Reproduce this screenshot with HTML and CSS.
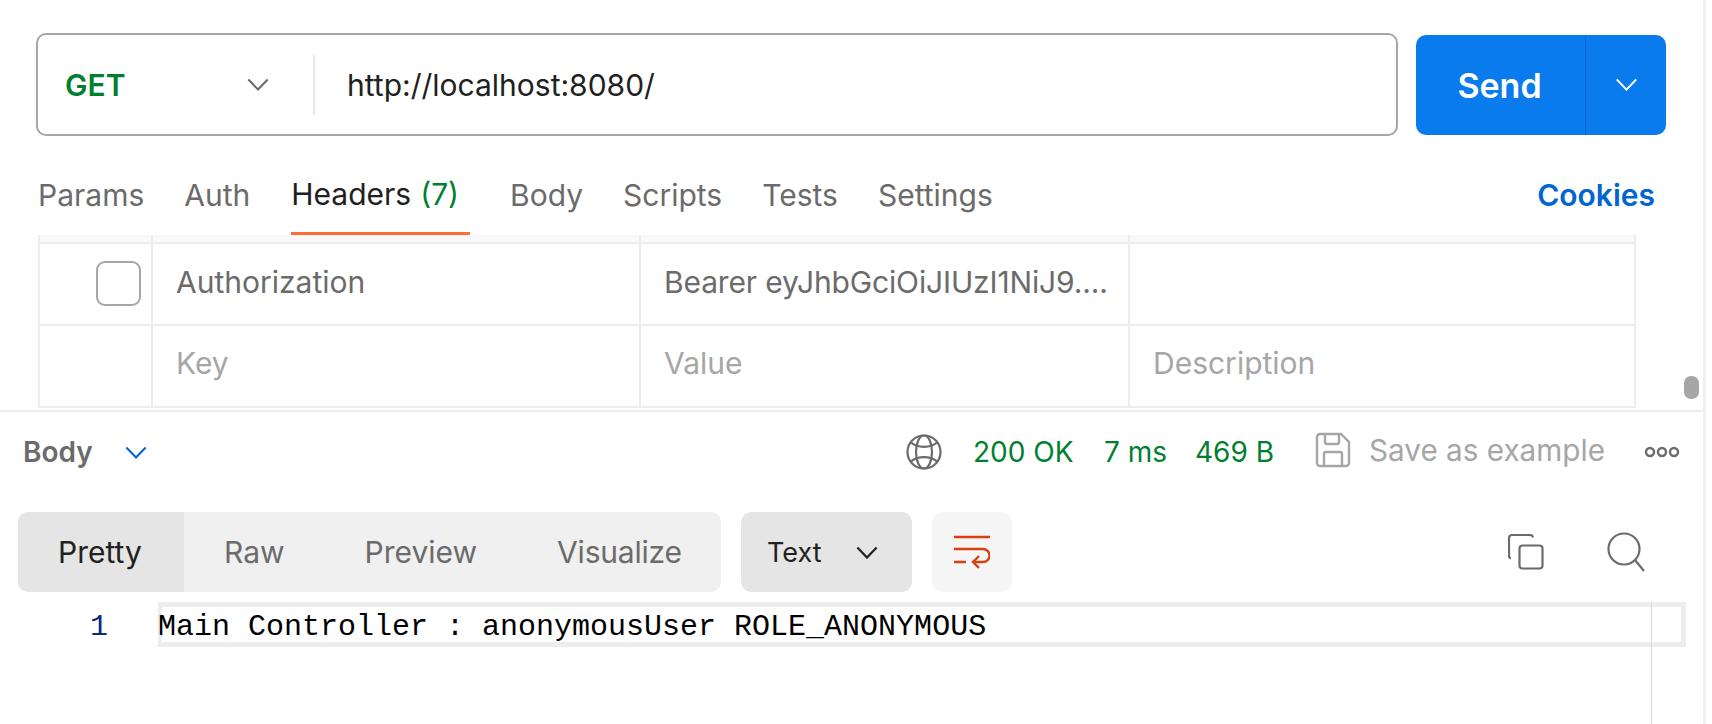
FILE: index.html
```html
<!DOCTYPE html>
<html lang="en">
<head>
<meta charset="utf-8">
<title>Request</title>
<link rel="stylesheet" href="styles.css">
</head>
<body>
<div class="app">
  <section class="request">
    <div class="request-bar">
      <div class="url-box">
        <div class="method">
          <span class="method-name">GET</span>
          <svg class="chev-method" viewBox="0 0 24 14"><path d="M1.5 1.5 12 12.5 22.5 1.5"/></svg>
        </div>
        <div class="url">http://localhost:8080/</div>
      </div>
      <div class="send">
        <span class="send-main">Send</span>
        <span class="send-more"><svg class="chev-send" viewBox="0 0 24 14"><path d="M1.5 1.5 12 12.5 22.5 1.5"/></svg></span>
      </div>
    </div>
    <nav class="tabs">
      <span class="tab">Params</span>
      <span class="tab">Auth</span>
      <span class="tab tab-active">Headers<span class="count">(7)</span></span>
      <span class="tab">Body</span>
      <span class="tab">Scripts</span>
      <span class="tab">Tests</span>
      <span class="tab">Settings</span>
      <span class="cookies">Cookies</span>
    </nav>
    <div class="table">
      <div class="row row-head"><span></span><span></span><span></span><span></span></div>
      <div class="row row-data">
        <span class="cell cell-check"><i class="checkbox"></i></span>
        <span class="cell">Authorization</span>
        <span class="cell cell-token">Bearer eyJhbGciOiJIUzI1NiJ9....</span>
        <span class="cell"></span>
      </div>
      <div class="row row-empty">
        <span class="cell"></span>
        <span class="cell ph">Key</span>
        <span class="cell ph">Value</span>
        <span class="cell ph">Description</span>
      </div>
    </div>
    <div class="thumb"></div>
  </section>
  <section class="response">
    <div class="status-bar">
      <span class="body-label">Body</span>
      <svg class="chev-body" viewBox="0 0 24 14"><path d="M1.5 1.5 12 12.5 22.5 1.5"/></svg>
      <svg class="globe" viewBox="0 0 36 36"><circle cx="18" cy="18" r="16.5"/><ellipse cx="18" cy="18" rx="8" ry="16.5"/><path d="M5 8.5c3.500 3 8 4.300 13 4.300s9.500-1.300 13-4.300M5 27.500c3.500-3 8-4.300 13-4.300s9.500 1.300 13 4.300"/></svg>
      <span class="stat stat-status">200 OK</span>
      <span class="stat stat-time">7 ms</span>
      <span class="stat stat-size">469 B</span>
      <svg class="save" viewBox="0 0 36 36"><path d="M2 5a3 3 0 0 1 3-3h21l8 8v21a3 3 0 0 1-3 3H5a3 3 0 0 1-3-3z"/><path d="M10 2v8a2 2 0 0 0 2 2h10a2 2 0 0 0 2-2V2M9 34V22a2 2 0 0 1 2-2h14a2 2 0 0 1 2 2v12"/></svg>
      <span class="save-text">Save as example</span>
      <svg class="dots" viewBox="0 0 36 12"><circle cx="6" cy="6" r="4"/><circle cx="18" cy="6" r="4"/><circle cx="30" cy="6" r="4"/></svg>
    </div>
    <div class="toolbar">
      <div class="modes">
        <span class="mode mode-active">Pretty</span>
        <span class="mode mode-raw">Raw</span>
        <span class="mode mode-preview">Preview</span>
        <span class="mode mode-vis">Visualize</span>
      </div>
      <div class="format">
        <span>Text</span>
        <svg class="chev-format" viewBox="0 0 24 14"><path d="M1.500 1.500 12 12.500 22.500 1.500"/></svg>
      </div>
      <div class="wrap">
        <svg class="wrap-icon" viewBox="0 0 36 34"><path d="M0 2h36M0 14h29a6.500 6.500 0 0 1 0 13H19M25 21l-6 6 6 6M0 27h12"/></svg>
      </div>
      <svg class="copy" viewBox="0 0 36 36"><path d="M3 24.500A2.500 2.500 0 0 1 1 22V4a3 3 0 0 1 3-3h18a3 3 0 0 1 3 2.500"/><rect x="11.500" y="11.500" width="23" height="23" rx="3"/></svg>
      <svg class="search" viewBox="0 0 38 40"><circle cx="17" cy="17" r="15.500"/><path d="M28 28l9 11"/></svg>
    </div>
    <div class="editor">
      <span class="line-no">1</span>
      <div class="line">Main Controller : anonymousUser ROLE_ANONYMOUS</div>
      <div class="ruler"></div>
    </div>
  </section>
</div>
</body>
</html>
```
FILE: styles.css
```css
* { box-sizing: border-box; }
html, body { margin: 0; padding: 0; background: #fff; }
body { font-family: Inter, "Liberation Sans", sans-serif; font-size: 30px; color: #6b6b6b; }
.app { width: 1706px; height: 724px; overflow: hidden; border-right: 3px solid #f0f0f0; display: flex; flex-direction: column; }
svg { display: block; fill: none; flex: none; }

.request { position: relative; height: 412px; }
.request-bar { display: flex; align-items: center; padding: 33px 0 0 36px; }
.url-box { width: 1362px; height: 103px; border: 2px solid #a6a6a6; border-radius: 10px; display: flex; align-items: center; }
.method { width: 277px; height: 60px; border-right: 2px solid #e6e6e6; display: flex; align-items: center; padding-left: 27px; }
.method-name { color: #007f31; font-weight: 600; width: 182px; }
.chev-method { width: 22px; height: 13px; stroke: #6b6b6b; stroke-width: 2.200; }
.url { color: #212121; padding-left: 32px; }
.send { margin-left: 18px; width: 250px; height: 100px; background: #097bed; border-radius: 10px; color: #fff; display: flex; font-weight: 600; font-size: 34px; }
.send-main { width: 169px; padding: 2px 2px 0 0; display: flex; align-items: center; justify-content: center; }
.send-more { flex: 1; border-left: 1px solid #0265d2; display: flex; align-items: center; justify-content: center; }
.chev-send { width: 23px; height: 13px; stroke: #fff; stroke-width: 2.200; }

.tabs { display: flex; height: 99px; padding: 20px 48px 0 38px; gap: 40px; }
.tab { height: 79px; padding-bottom: 1px; display: flex; align-items: center; white-space: pre; }
.tab-active { color: #212121; border-bottom: 3px solid #ff6c37; padding: 0 11px 0 0; margin-left: 1px; }
.count { color: #007f31; margin-left: 9px; }
.cookies { margin-left: auto; height: 78px; display: flex; align-items: center; color: #0265d2; font-weight: 600; }

.table { margin-left: 38px; width: 1598px; border: solid #ededed; border-width: 0 2px 2px; }
.row { display: grid; grid-template-columns: 111px 488px 489px 1fr; }
.row > span + span { border-left: 2px solid #ededed; }
.row-head { height: 9px; background: #f9f9f9; border-bottom: 2px solid #ededed; }
.row-data { height: 82px; border-bottom: 2px solid #ededed; }
.row-empty { height: 80px; }
.cell { display: flex; align-items: center; padding: 0 0 4px 23px; white-space: nowrap; }
.row-empty .cell { padding-bottom: 6px; }
.cell-token { letter-spacing: -0.14px; }
.cell-check { padding: 0 0 2px 56px; }
.checkbox { width: 45px; height: 45px; border: 2px solid #a6a6a6; border-radius: 9px; }
.ph { color: #a6a6a6; }
.thumb { position: absolute; left: 1684px; top: 376px; width: 15px; height: 23px; border-radius: 7px; background: #a6a6a6; }

.response { flex: 1; border-top: 2px solid #ededed; margin-top: -2px; }
.status-bar { height: 100px; display: flex; align-items: center; padding: 0 0 20px 23px; }
.body-label { font-size: 28px; font-weight: 600; width: 102px; }
.chev-body { width: 22px; height: 13px; stroke: #0265d2; stroke-width: 2.200; margin-right: 759px; }
.globe { width: 36px; height: 36px; stroke: #6b6b6b; stroke-width: 2.200; margin-right: 31px; }
.stat { color: #007f31; white-space: nowrap; font-size: 28px; }
.stat-status { width: 131px; }
.stat-time { width: 91px; }
.stat-size { width: 120px; }
.save { width: 36px; height: 36px; stroke: #a6a6a6; stroke-width: 2.400; margin-right: 18px; margin-top: -4px; }
.save-text { color: #a6a6a6; width: 275px; font-size: 29.7px; white-space: nowrap; padding-bottom: 4px; }
.dots { width: 36px; height: 12px; stroke: #6b6b6b; stroke-width: 2.400; }

.toolbar { height: 80px; display: flex; padding-left: 18px; }
.modes { width: 703px; background: #f0f0f0; border-radius: 10px; display: flex; overflow: hidden; }
.mode { display: flex; align-items: center; }
.mode-active { width: 166px; padding-right: 2px; background: #e5e5e5; color: #212121; justify-content: center; }
.mode-raw { margin-left: 40px; }
.mode-preview { margin-left: 80px; }
.mode-vis { margin-left: 80px; letter-spacing: -0.2px; }
.format { margin-left: 20px; width: 171px; background: #e5e5e5; border-radius: 10px; display: flex; align-items: center; padding-left: 26px; color: #212121; font-size: 27px; }
.format span { width: 89px; }
.chev-format { width: 22px; height: 13px; stroke: #212121; stroke-width: 2.400; }
.wrap { margin-left: 20px; width: 80px; background: #f5f5f5; border-radius: 10px; display: flex; align-items: center; justify-content: center; }
.wrap-icon { width: 36px; height: 34px; stroke: #d9400f; stroke-width: 2.400; }
.copy { width: 36px; height: 36px; stroke: #6b6b6b; stroke-width: 2.200; margin: 22px 0 0 496px; }
.search { width: 38px; height: 40px; stroke: #6b6b6b; stroke-width: 2.200; margin: 20px 0 0 63px; }

.editor { position: relative; display: flex; margin-top: 10px; height: 122px; }
.line-no { width: 158px; padding: 7px 50px 0 0; text-align: right; font-family: "Liberation Mono", monospace; font-size: 30px; line-height: 37px; color: #0a2a7a; }
.line { width: 1528px; height: 45px; border: solid #ededed; border-width: 5px 5px 5px 4px; font-family: "Liberation Mono", monospace; font-size: 30px; line-height: 41px; color: #000; white-space: pre; text-indent: -4px; }
.ruler { position: absolute; left: 1651px; top: 0; bottom: 0; width: 1px; background: #d9d9d9; }
```
